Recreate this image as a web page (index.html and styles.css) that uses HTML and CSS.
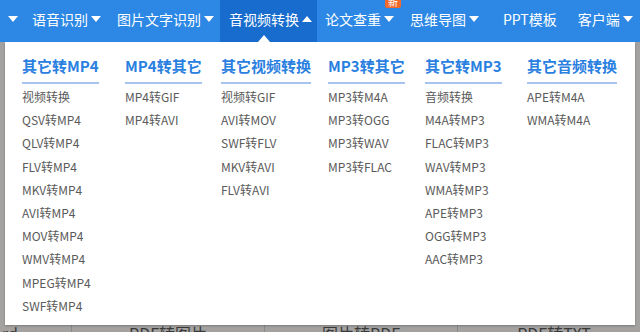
FILE: index.html
```html
<!DOCTYPE html>
<html lang="zh-CN">
<head>
	<meta charset="UTF-8">
	<title>音视频转换</title>
	<link rel="stylesheet" href="styles.css">
</head>
<body>
	<div class="nav">
		<div class="nav-item first"><span class="caret"></span></div>
		<div class="nav-item">语音识别<span class="caret"></span></div>
		<div class="nav-item">图片文字识别<span class="caret"></span></div>
		<div class="nav-item on">音视频转换<span class="caret up"></span></div>
		<div class="nav-item">论文查重<span class="caret"></span><span class="badge">新</span></div>
		<div class="nav-item wide">思维导图<span class="caret"></span></div>
		<div class="nav-item plain">PPT模板</div>
		<div class="nav-item">客户端<span class="caret"></span></div>
	</div>

	<div class="stage">
		<div class="tools">
			<div class="tool">PDF转Word</div>
			<div class="tool">PDF转图片</div>
			<div class="tool">图片转PDF</div>
			<div class="tool">PDF转TXT</div>
		</div>

		<div class="dropdown">
			<div class="col">
				<div class="col-title">其它转MP4</div>
				<a>视频转换</a>
				<a>QSV转MP4</a>
				<a>QLV转MP4</a>
				<a>FLV转MP4</a>
				<a>MKV转MP4</a>
				<a>AVI转MP4</a>
				<a>MOV转MP4</a>
				<a>WMV转MP4</a>
				<a>MPEG转MP4</a>
				<a>SWF转MP4</a>
			</div>
			<div class="col">
				<div class="col-title">MP4转其它</div>
				<a>MP4转GIF</a>
				<a>MP4转AVI</a>
			</div>
			<div class="col">
				<div class="col-title">其它视频转换</div>
				<a>视频转GIF</a>
				<a>AVI转MOV</a>
				<a>SWF转FLV</a>
				<a>MKV转AVI</a>
				<a>FLV转AVI</a>
			</div>
			<div class="col">
				<div class="col-title">MP3转其它</div>
				<a>MP3转M4A</a>
				<a>MP3转OGG</a>
				<a>MP3转WAV</a>
				<a>MP3转FLAC</a>
			</div>
			<div class="col">
				<div class="col-title">其它转MP3</div>
				<a>音频转换</a>
				<a>M4A转MP3</a>
				<a>FLAC转MP3</a>
				<a>WAV转MP3</a>
				<a>WMA转MP3</a>
				<a>APE转MP3</a>
				<a>OGG转MP3</a>
				<a>AAC转MP3</a>
			</div>
			<div class="col">
				<div class="col-title">其它音频转换</div>
				<a>APE转M4A</a>
				<a>WMA转M4A</a>
			</div>
		</div>
	</div>
</body>
</html>
```

FILE: styles.css
```css
* {
	box-sizing: border-box;
}

body {
	margin: 0;
	width: 640px;
	height: 332px;
	overflow: hidden;
	font-family: "Noto Sans CJK SC", "Liberation Sans", sans-serif;
	background: #a3a2a0;
}

.nav {
	display: flex;
	height: 42px;
	background: #2c88e4;
	color: #fff;
	font-size: 14px;
	white-space: nowrap;
}

.nav-item {
	position: relative;
	display: flex;
	align-items: center;
	padding: 0 8px 5px;
}

.nav-item.first {
	padding: 0 6px 5px 5px;
}

.nav-item.wide {
	padding-right: 16px;
}

.nav-item.plain {
	padding-right: 13px;
}

.nav-item.on {
	background: #176cce;
	padding: 0 5px 5px 9px;
	margin-left: -2px;
}

/* small white pointer under the open tab */
.nav-item.on::after {
	content: "";
	position: absolute;
	left: 38px;
	bottom: 0;
	border-left: 6px solid transparent;
	border-right: 6px solid transparent;
	border-bottom: 7px solid #fff;
}

.caret {
	display: inline-block;
	margin-left: 3px;
	border-left: 5px solid transparent;
	border-right: 5px solid transparent;
	border-top: 6px solid #fff;
}

.caret.up {
	border-top: 0;
	border-bottom: 6px solid #fff;
}

.badge {
	position: absolute;
	right: 1px;
	top: -7px;
	padding: 0 3px;
	height: 15px;
	line-height: 17px;
	font-size: 10px;
	background: #f2692b;
	border-radius: 2px;
}

.stage {
	position: relative;
	height: 290px;
}

.tools {
	display: flex;
	margin-left: -121px;
	padding-top: 281px;
}

.tool {
	width: 193px;
	flex: none;
	border-right: 1px solid #8a8a8a;
	text-align: center;
	font-size: 16px;
	line-height: 20px;
	color: #3a3a3a;
}

.dropdown {
	position: absolute;
	left: 5px;
	top: 0;
	width: 630px;
	height: 283px;
	background: #fff;
	box-shadow: 0 1px 2px rgba(0, 0, 0, 0.25);
	padding: 14px 17px 0;
	display: grid;
	grid-template-columns: 103px 96px 107px 97px 102px auto;
	align-items: start;
}

.col {
	display: flex;
	flex-direction: column;
	align-items: flex-start;
}

.col-title {
	font-size: 15px;
	font-weight: bold;
	line-height: 20px;
	color: #2a80e0;
	padding-bottom: 6px;
	border-bottom: 2px solid #a6c4ee;
	margin-bottom: 1px;
	white-space: nowrap;
}

.col a {
	font-size: 12px;
	line-height: 23.2px;
	color: #5a5a5a;
	white-space: nowrap;
}
```
